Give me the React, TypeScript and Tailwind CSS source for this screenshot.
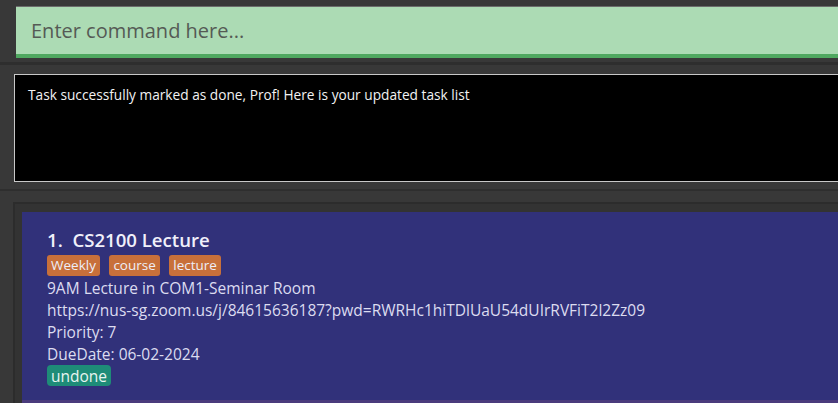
import React from 'react'

const font = { fontFamily: '"Open Sans", "Noto Sans", sans-serif' }

const Tag = ({ label, color }: { label: string; color: string }) => (
    <span className={`${color} rounded-[3px] px-[4px] h-[21px] flex items-center text-[13.5px] leading-none text-[#eeeef8]`}>
        {label}
    </span>
)

const App = () => {
    return (
        <div className="w-[838px] h-[403px] overflow-hidden bg-[#383838] flex flex-col" style={font}>
            {/* command box */}
            <div className="pt-[6px] pl-[16px] h-[62px]">
                <div className="h-[52px] bg-[#acdbb4] border-t border-[#6b6b6b] border-b-[4px] border-b-[#4fa860] flex items-center pl-[15px]">
                    <span className="text-[20px] text-[#555a55]">Enter command here...</span>
                </div>
            </div>
            <div className="h-[3px] bg-[#2e2e2e]" />

            {/* result display */}
            <div className="h-[126px] pt-[9px] pl-[14px] pb-[7px] border-b-[2px] border-[#2e2e2e]">
                <div className="h-full bg-black border border-[#c8c8c8] border-r-0 pl-[13px] pt-[10px]">
                    <p className="text-[13.7px] text-[#f2f2f2]">Task successfully marked as done, Prof! Here is your updated task list</p>
                </div>
            </div>

            {/* task list */}
            <div className="flex-1 pt-[11px] pl-[13px]">
                <div className="h-full bg-[#333333] border-l-[2px] border-t-[2px] border-[#2c2c2c] pl-[7px] pt-[8px]">
                    <div className="h-full bg-[#31317a] border-b-[3px] border-[#4a3b7c] pl-[25px] pt-[16px] text-[#dcdcf0] text-[15.5px] leading-[22px]">
                        <div className="text-[18.6px] font-semibold text-[#f0f0fa] leading-[24px]">1.&nbsp;&nbsp;CS2100 Lecture</div>
                        <div className="flex gap-[9.5px] mt-[3px] mb-[1px]">
                            <Tag label="Weekly" color="bg-[#c8703a]" />
                            <Tag label="course" color="bg-[#c8703a]" />
                            <Tag label="lecture" color="bg-[#c8703a]" />
                        </div>
                        <div>9AM Lecture in COM1-Seminar Room</div>
                        <div>https://nus-sg.zoom.us/j/84615636187?pwd=RWRHc1hiTDlUaU54dUIrRVFiT2l2Zz09</div>
                        <div>Priority: 7</div>
                        <div>DueDate: 06-02-2024</div>
                        <div className="flex">
                            <span className="bg-[#1e8c78] rounded-[4px] px-[4px] h-[21px] flex items-center text-[15.5px] text-[#e8f4f0]">undone</span>
                        </div>
                    </div>
                </div>
            </div>
        </div>
    )
}

export default App
